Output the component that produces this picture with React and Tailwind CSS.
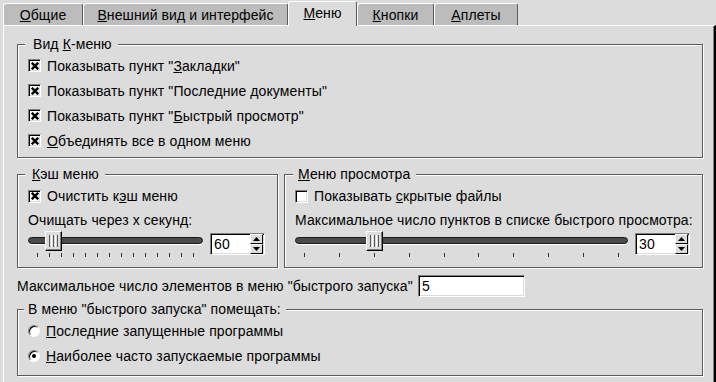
import React from 'react';

const frame = 'relative border border-[#5a5a5a] shadow-[inset_1px_1px_0_#fff,1px_1px_0_#fff]';
const sunken = 'bg-white border border-t-[#808080] border-l-[#808080] border-b-white border-r-white shadow-[inset_1px_1px_0_#000,inset_-1px_-1px_0_#dcdcdc]';

const Check = ({ checked }) => (
  <span className={`w-[13px] h-[13px] shrink-0 flex items-center justify-center ${sunken}`}>
    {checked && (
      <svg width="8" height="8" viewBox="0 0 8 8">
        <path d="M0.8 0.8L7.2 7.2M7.2 0.8L0.8 7.2" stroke="#000" strokeWidth="2.5" />
      </svg>
    )}
  </span>
);

const Radio = ({ on }) => (
  <span className="w-[12px] h-[12px] shrink-0 rounded-full bg-white border border-t-[#808080] border-l-[#808080] border-b-white border-r-white shadow-[inset_1px_1px_0_#000] flex items-center justify-center">
    {on && <span className="w-[4px] h-[4px] rounded-full bg-black" />}
  </span>
);

const Title = ({ className, children }) => (
  <span className={`absolute -top-[9px] leading-[16px] whitespace-nowrap bg-[#dcdcdc] ${className}`}>{children}</span>
);

const SpinButton = ({ up }) => (
  <span className="w-[13px] h-[10px] flex items-center justify-center bg-[#dcdcdc] border border-t-white border-l-white border-b-black border-r-black">
    <svg width="7" height="4" viewBox="0 0 7 4">
      {up ? <path d="M0 4L3.5 0L7 4Z" fill="#000" /> : <path d="M0 0L7 0L3.5 4Z" fill="#000" />}
    </svg>
  </span>
);

const Spin = ({ value }) => (
  <div className={`w-[55px] h-[22px] mt-[2px] ml-[7px] shrink-0 flex items-center ${sunken}`}>
    <span className="flex-1 pl-[3px]">{value}</span>
    <div className="flex flex-col pr-[1px]">
      <SpinButton up />
      <SpinButton />
    </div>
  </div>
);

const Slider = ({ handle, ticks }) => (
  <div className="relative flex-1 min-w-0 h-[26px]">
    <div className="mt-[6px] h-[7px] rounded-full bg-[#4a4a4a] border border-[#1a1a1a] shadow-[0_1px_0_#fff]" />
    <div className="mt-[9px] h-[4px] flex justify-between px-[9px]">
      {Array.from({ length: ticks }).map((_, i) => (
        <span key={i} className="w-px h-[4px] bg-[#333]" />
      ))}
    </div>
    <div
      className="absolute top-0 w-[17px] h-[20px] bg-[#dcdcdc] border border-t-white border-l-white border-b-black border-r-black shadow-[inset_-1px_-1px_0_#808080] flex items-center justify-center gap-px"
      style={{ left: handle }}
    >
      <span className="w-px h-[12px] bg-[#555]" />
      <span className="w-px h-[12px] bg-white" />
      <span className="w-px h-[12px] bg-[#555]" />
      <span className="w-px h-[12px] bg-white" />
      <span className="w-px h-[12px] bg-[#555]" />
    </div>
  </div>
);

const Row = ({ children, h = 'h-[25px]' }) => (
  <div className={`flex items-center gap-[6px] whitespace-nowrap ${h}`}>{children}</div>
);

const tabs = [
  { w: 'w-[80px]', label: <><u>О</u>бщие</> },
  { w: 'w-[205px]', label: <><u>В</u>нешний вид и интерфейс</> },
  { w: 'w-[69px]', label: <><u>М</u>еню</>, active: true },
  { w: 'w-[77px]', label: <><u>К</u>нопки</> },
  { w: 'w-[84px]', label: <><u>А</u>плеты</> },
];

export default function App() {
  return (
    <div className="w-[716px] h-[382px] overflow-hidden bg-[#dcdcdc] text-black text-[14px] tracking-[0.1px] leading-none font-['Liberation_Sans',Arial,sans-serif] select-none">
      <div className="flex items-end h-[25px] pl-[3px]">
        {tabs.map((t, i) =>
          t.active ? (
            <div
              key={i}
              className={`${t.w} h-[25px] -mb-px relative z-10 pb-[2px] flex items-center justify-center bg-[#dcdcdc] border-t border-l border-white border-r border-r-[#5a5a5a] rounded-t-[3px]`}
            >
              {t.label}
            </div>
          ) : (
            <div
              key={i}
              className={`${t.w} h-[22px] flex items-center justify-center bg-[#bcbcbc] border-t border-l border-white border-r border-r-[#5a5a5a] rounded-t-[3px]`}
            >
              {t.label}
            </div>
          )
        )}
      </div>

      <div className="ml-[3px] h-[400px] border-l border-t border-white border-r-2 border-r-black shadow-[inset_-1px_0_0_#808080] pl-[13px] pr-[11px] pt-[18px]">
        <div className={`${frame} h-[114px] pt-[8px] pl-[10px]`}>
          <Title className="left-[7px] pl-[8px] pr-[6px]">Вид <u>К</u>-меню</Title>
          <Row><Check checked /><span>Показывать пункт "<u>З</u>акладки"</span></Row>
          <Row><Check checked /><span>Показывать пункт "Последние <u>д</u>окументы"</span></Row>
          <Row><Check checked /><span>Показывать пункт "<u>Б</u>ыстрый просмотр"</span></Row>
          <Row><Check checked /><span><u>О</u>бъединять все в одном меню</span></Row>
        </div>

        <div className="mt-[16px] flex gap-[6px]">
          <div className={`${frame} w-[261px] shrink-0 h-[94px] pt-[11px] pl-[10px] pr-[12px]`}>
            <Title className="left-[7px] pl-[7px] pr-[6px]"><u>К</u>эш меню</Title>
            <Row h="h-[20px]"><Check checked /><span>Очистить к<u>э</u>ш меню</span></Row>
            <div className="mt-[4px] h-[20px] flex items-center whitespace-nowrap">Очищать через x секунд:</div>
            <div className="mt-[1px] flex items-start">
              <Slider handle={17} ticks={14} />
              <Spin value="60" />
            </div>
          </div>

          <div className={`${frame} flex-1 min-w-0 h-[94px] pt-[11px] pl-[10px] pr-[12px]`}>
            <Title className="left-[8px] pl-[5px] pr-[6px]"><u>М</u>еню просмотра</Title>
            <Row h="h-[20px]"><Check /><span>Показывать <u>с</u>крытые файлы</span></Row>
            <div className="mt-[4px] h-[20px] flex items-center whitespace-nowrap">Максимальное число пунктов в списке быстрого просмотра:</div>
            <div className="mt-[1px] flex items-start">
              <Slider handle={71} ticks={10} />
              <Spin value="30" />
            </div>
          </div>
        </div>

        <div className="mt-[7px] h-[22px] flex items-center">
          <span className="w-[401px] shrink-0 whitespace-nowrap">Максимальное число элементов в меню "быстрого запуска"</span>
          <div className={`w-[107px] h-[22px] flex items-center pl-[3px] ${sunken}`}>5</div>
        </div>

        <div className={`${frame} mt-[12px] h-[67px] pt-[8px] pl-[10px]`}>
          <Title className="left-[6px] pl-[4px] pr-[5px]">В меню "быстрого запуска" помещать:</Title>
          <Row><Radio /><span><u>П</u>оследние запущенные программы</span></Row>
          <Row><Radio on /><span><u>Н</u>аиболее часто запускаемые программы</span></Row>
        </div>
      </div>
    </div>
  );
}
